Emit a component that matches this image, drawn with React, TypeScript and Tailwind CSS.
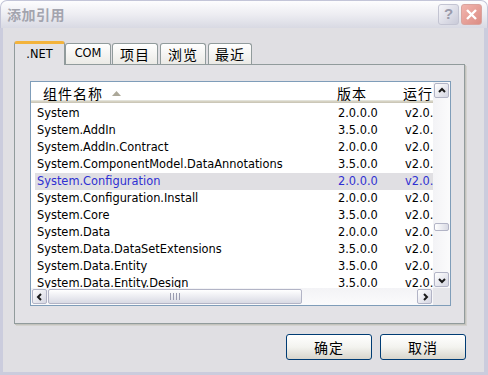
import React from "react";

const latin = "font-['DejaVu_Sans','Noto_Sans_CJK_SC',sans-serif]";
const cjk = "font-['Noto_Sans_CJK_SC','DejaVu_Sans',sans-serif]";

const rows = [
  ["System", "2.0.0.0"],
  ["System.AddIn", "3.5.0.0"],
  ["System.AddIn.Contract", "2.0.0.0"],
  ["System.ComponentModel.DataAnnotations", "3.5.0.0"],
  ["System.Configuration", "2.0.0.0"],
  ["System.Configuration.Install", "2.0.0.0"],
  ["System.Core", "3.5.0.0"],
  ["System.Data", "2.0.0.0"],
  ["System.Data.DataSetExtensions", "3.5.0.0"],
  ["System.Data.Entity", "3.5.0.0"],
  ["System.Data.Entity.Design", "3.5.0.0"],
];

const Chevron = ({ dir }: { dir: "up" | "down" | "left" | "right" }) => {
  const pts = {
    up: "2,6 5,3 8,6",
    down: "2,4 5,7 8,4",
    left: "6,2 3,5 6,8",
    right: "4,2 7,5 4,8",
  }[dir];
  return (
    <svg width="10" height="10" viewBox="0 0 10 10">
      <polyline points={pts} fill="none" stroke="#1b1b1b" strokeWidth="2" />
    </svg>
  );
};

const ScrollBtn = ({ dir }: { dir: "up" | "down" | "left" | "right" }) => (
  <div className="w-[17px] h-[17px] p-px shrink-0">
    <div className="w-full h-full rounded-[2px] border border-[#b2b4c6] bg-linear-to-br from-white to-[#d5d6e2] flex items-center justify-center">
      <Chevron dir={dir} />
    </div>
  </div>
);

const Tab = ({ label, w, active, isCjk }: { label: string; w: string; active?: boolean; isCjk?: boolean }) =>
  active ? (
    <div
      className={`${w} h-[24px] -mb-px relative z-10 rounded-t-[3px] border-x border-[#919b9c] bg-[#e3e2e6] border-t-[3px] border-t-[#f3b33c] flex justify-center pt-[2px] text-[11.4px] text-black ${latin}`}
    >
      {label}
    </div>
  ) : (
    <div
      className={`${w} h-[21px] rounded-t-[3px] border border-b-0 border-[#919b9c] bg-linear-to-b from-white to-[#ebeae6] flex items-center justify-center text-black ${
        isCjk ? `${cjk} text-[14px] tracking-[1px]` : `${latin} text-[11.4px]`
      }`}
    >
      {label}
    </div>
  );

const XpButton = ({ label }: { label: string }) => (
  <button
    className={`w-[86px] h-[26px] rounded-[3px] border border-[#003c74] bg-linear-to-b from-white via-[#f3f3ef] to-[#d8d5cc] text-[14px] tracking-[1px] text-black ${cjk} flex items-center justify-center`}
  >
    {label}
  </button>
);

export default function App() {
  return (
    <div className="w-[488px] h-[375px] flex flex-col overflow-hidden select-none">
      {/* title bar */}
      <div className="h-[28px] shrink-0 rounded-t-[7px] border border-b-0 border-[#c3c5d8] bg-linear-to-b from-[#fdfdfe] via-[#ededf2] to-[#d8d9e3] flex items-center pl-[6px] pr-[5px]">
        <span className={`${cjk} text-[14px] font-bold tracking-[0.5px] text-[#a3a4ae]`}>添加引用</span>
        <div className="ml-auto flex gap-[2px]">
          <div className="w-[21px] h-[21px] rounded-[3px] border border-[#c3c4d2] bg-linear-to-br from-[#f6f6fa] to-[#c9cad8] flex items-center justify-center text-[15px] font-bold text-[#9a9bab] font-['Liberation_Sans',sans-serif]">
            ?
          </div>
          <div className="w-[21px] h-[21px] rounded-[3px] border border-[#d9a49e] bg-linear-to-br from-[#f2b5ae] to-[#db8c84] flex items-center justify-center">
            <svg width="13" height="13" viewBox="0 0 13 13">
              <path d="M2 2 L11 11 M11 2 L2 11" stroke="white" strokeWidth="2.4" />
            </svg>
          </div>
        </div>
      </div>

      {/* frame + client */}
      <div className="flex-1 flex flex-col border-l-[3px] border-r-[4px] border-b-[3px] border-[#cbccdd] bg-[#e0dfe3]">
        <div className="pt-[13px] pl-[11px] flex flex-col">
          {/* tabs */}
          <div className="flex items-end h-[23px]">
            <Tab label=".NET" w="w-[51px]" active />
            <Tab label="COM" w="w-[46px]" />
            <div className="w-px" />
            <Tab label="项目" w="w-[46px]" isCjk />
            <div className="w-[2px]" />
            <Tab label="浏览" w="w-[46px]" isCjk />
            <div className="w-[2px]" />
            <Tab label="最近" w="w-[44px]" isCjk />
          </div>
          {/* panel */}
          <div className="w-[451px] h-[260px] border border-[#919b9c] shadow-[1px_1px_0_#c4c3bd,2px_2px_0_#d3d2cf] bg-[#e3e2e6] pl-[15px] pt-[16px]">
            {/* list box */}
            <div className="w-[421px] h-[225px] border border-[#7f9db9] bg-white flex flex-col">
              <div className="flex flex-1 min-h-0">
                <div className="flex-1 min-w-0 overflow-hidden flex flex-col">
                  {/* header */}
                  <div className="h-[21px] shrink-0 flex items-center pt-[1px] bg-white shadow-[inset_0_-1px_0_#cbc7b8,inset_0_-2px_0_#d6d2c2,inset_0_-3px_0_#e2e2da]">
                    <div className={`w-[299px] shrink-0 pl-[12px] flex items-center gap-[9px] ${cjk} text-[14px] tracking-[1px] text-black`}>
                      组件名称
                      <svg width="9" height="5" viewBox="0 0 9 5">
                        <polygon points="0,5 4.5,0 9,5" fill="#aca899" />
                      </svg>
                    </div>
                    <div className="w-px h-[15px] bg-[#c7c5b2] mb-[2px]" />
                    <div className={`w-[67px] shrink-0 pl-[7px] ${cjk} text-[14px] tracking-[1px] text-black`}>版本</div>
                    <div className="w-px h-[15px] bg-[#c7c5b2] mb-[2px]" />
                    <div className={`pl-[6px] whitespace-nowrap ${cjk} text-[14px] tracking-[1px] text-black`}>运行时版本</div>
                  </div>
                  {/* rows */}
                  <div className="pt-[2px] pl-[4px] flex flex-col">
                    {rows.map(([name, ver], i) => {
                      const sel = i === 4;
                      return (
                        <div
                          key={name}
                          className={`h-[17px] shrink-0 flex items-center pt-[1px] whitespace-nowrap text-[11.4px] ${latin} ${
                            sel ? "bg-[#e0dfe3] text-[#2f2fd2]" : "text-black"
                          }`}
                        >
                          <div className="w-[296px] shrink-0 pl-[2px]">{name}</div>
                          <div className="w-[67px] shrink-0 pl-[7px]">{ver}</div>
                          <div className="pl-[7px]">v2.0.50727</div>
                        </div>
                      );
                    })}
                  </div>
                </div>
                {/* vertical scrollbar */}
                <div className="w-[17px] shrink-0 bg-linear-to-r from-[#f3f3f6] to-[#fbfbfc] flex flex-col">
                  <ScrollBtn dir="up" />
                  <div className="flex-1 flex flex-col">
                    <div className="h-[124px]" />
                    <div className="h-[8px] mx-px rounded-[2px] border border-[#b2b4c6] bg-linear-to-r from-white to-[#d9dae4]" />
                  </div>
                  <ScrollBtn dir="down" />
                </div>
              </div>
              {/* horizontal scrollbar */}
              <div className="h-[17px] shrink-0 flex">
                <div className="flex-1 flex bg-linear-to-b from-[#f3f3f6] to-[#fbfbfc]">
                  <ScrollBtn dir="left" />
                  <div className="w-[254px] h-[17px] py-px">
                    <div className="w-full h-full rounded-[2px] border border-[#b2b4c6] bg-linear-to-b from-white to-[#d9dae4] flex items-center justify-center gap-[2px]">
                      <div className="w-px h-[7px] bg-[#9a9cb0]" />
                      <div className="w-px h-[7px] bg-[#9a9cb0]" />
                      <div className="w-px h-[7px] bg-[#9a9cb0]" />
                      <div className="w-px h-[7px] bg-[#9a9cb0]" />
                    </div>
                  </div>
                  <div className="flex-1" />
                  <ScrollBtn dir="right" />
                </div>
                <div className="w-[17px] bg-[#e6e6ea]" />
              </div>
            </div>
          </div>
        </div>
        {/* buttons */}
        <div className="flex justify-end gap-[8px] pr-[18px] mt-[10px]">
          <XpButton label="确定" />
          <XpButton label="取消" />
        </div>
      </div>
    </div>
  );
}
